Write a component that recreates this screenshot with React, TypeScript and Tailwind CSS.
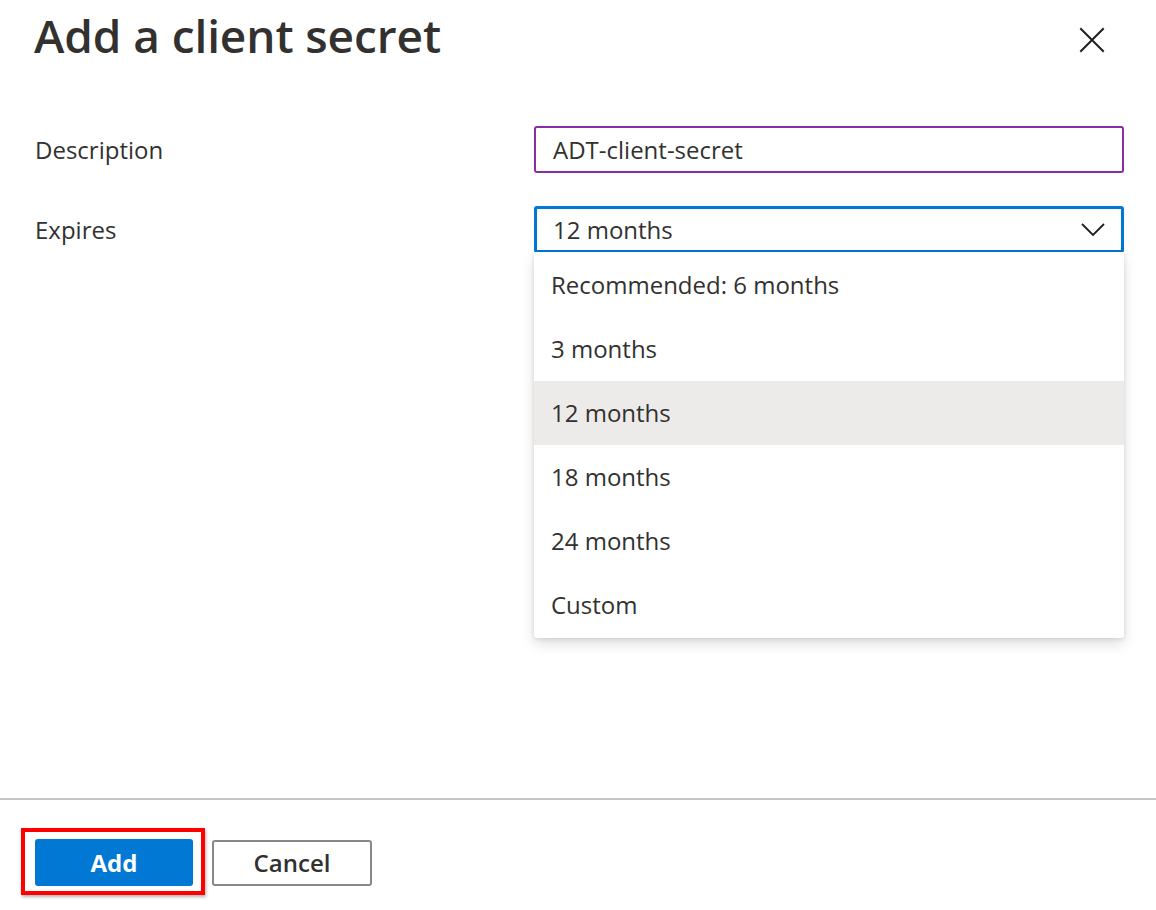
import React from "react";

const options = [
  "Recommended: 6 months",
  "3 months",
  "12 months",
  "18 months",
  "24 months",
  "Custom",
];

const font = "font-['Segoe_UI','Open_Sans','Noto_Sans',sans-serif]";

export default function App() {
  return (
    <div className={`w-[1156px] h-[910px] bg-white flex flex-col text-[#323130] ${font}`}>
      {/* Header */}
      <div className="flex items-start justify-between pl-[34px] pr-[50px] pt-[3px] h-[96px]">
        <h2 className="text-[46px] leading-[64px] font-semibold tracking-[-0.1px]">Add a client secret</h2>
        <button aria-label="Close" className="mt-[23px]">
          <svg width="28" height="28" viewBox="0 0 28 28" fill="none">
            <path d="M3 3L25 25M25 3L3 25" stroke="#201f1e" strokeWidth="2" strokeLinecap="square" />
          </svg>
        </button>
      </div>

      {/* Form */}
      <div className="flex flex-col gap-[33px] pl-[35px] pr-[32px] pt-[30px]">
        <div className="flex items-center">
          <label className="w-[499px] text-[24px]">Description</label>
          <div className="w-[590px] h-[47px] border-2 border-[#8a2da5] rounded-[3px] flex items-center px-[17px] text-[24px]">
            ADT-client-secret
          </div>
        </div>

        <div className="flex items-center">
          <label className="w-[499px] text-[24px]">Expires</label>
          <div className="relative w-[590px]">
            <div className="h-[47px] border-[3px] border-[#0078d4] rounded-[3px] flex items-center justify-between pl-[16px] pr-[16px] text-[24px]">
              <span>12 months</span>
              <svg width="24" height="14" viewBox="0 0 24 14" fill="none">
                <path d="M1 1L12 12L23 1" stroke="#201f1e" strokeWidth="1.8" />
              </svg>
            </div>
            {/* Dropdown menu */}
            <ul className="absolute left-0 top-[46px] w-[590px] bg-white rounded-b-[3px] shadow-[0_6px_14px_rgba(0,0,0,0.13),0_1px_4px_rgba(0,0,0,0.11)] py-[1px] z-10">
              {options.map((o) => (
                <li
                  key={o}
                  className={`h-[64px] flex items-center px-[17px] text-[24px] ${o === "12 months" ? "bg-[#edebe9]" : ""}`}
                >
                  {o}
                </li>
              ))}
            </ul>
          </div>
        </div>
      </div>

      <div className="flex-1" />

      {/* Footer */}
      <div className="border-t-2 border-[#c8c6c4] h-[112px] flex items-start pl-[21px] pt-[28px] gap-[7px]">
        <div className="border-[4px] border-[#ff0000] pl-[10px] pr-[8px] pt-[7px] pb-[5px] shadow-[1px_2px_3px_rgba(0,0,0,0.3)]">
          <button className="w-[158px] h-[47px] bg-[#0078d4] rounded-[3px] text-white text-[24px] font-bold">
            Add
          </button>
        </div>
        <button className="mt-[12px] w-[160px] h-[46px] border-2 border-[#8a8886] rounded-[3px] text-[24px] font-semibold text-[#323130]">
          Cancel
        </button>
      </div>
    </div>
  );
}
